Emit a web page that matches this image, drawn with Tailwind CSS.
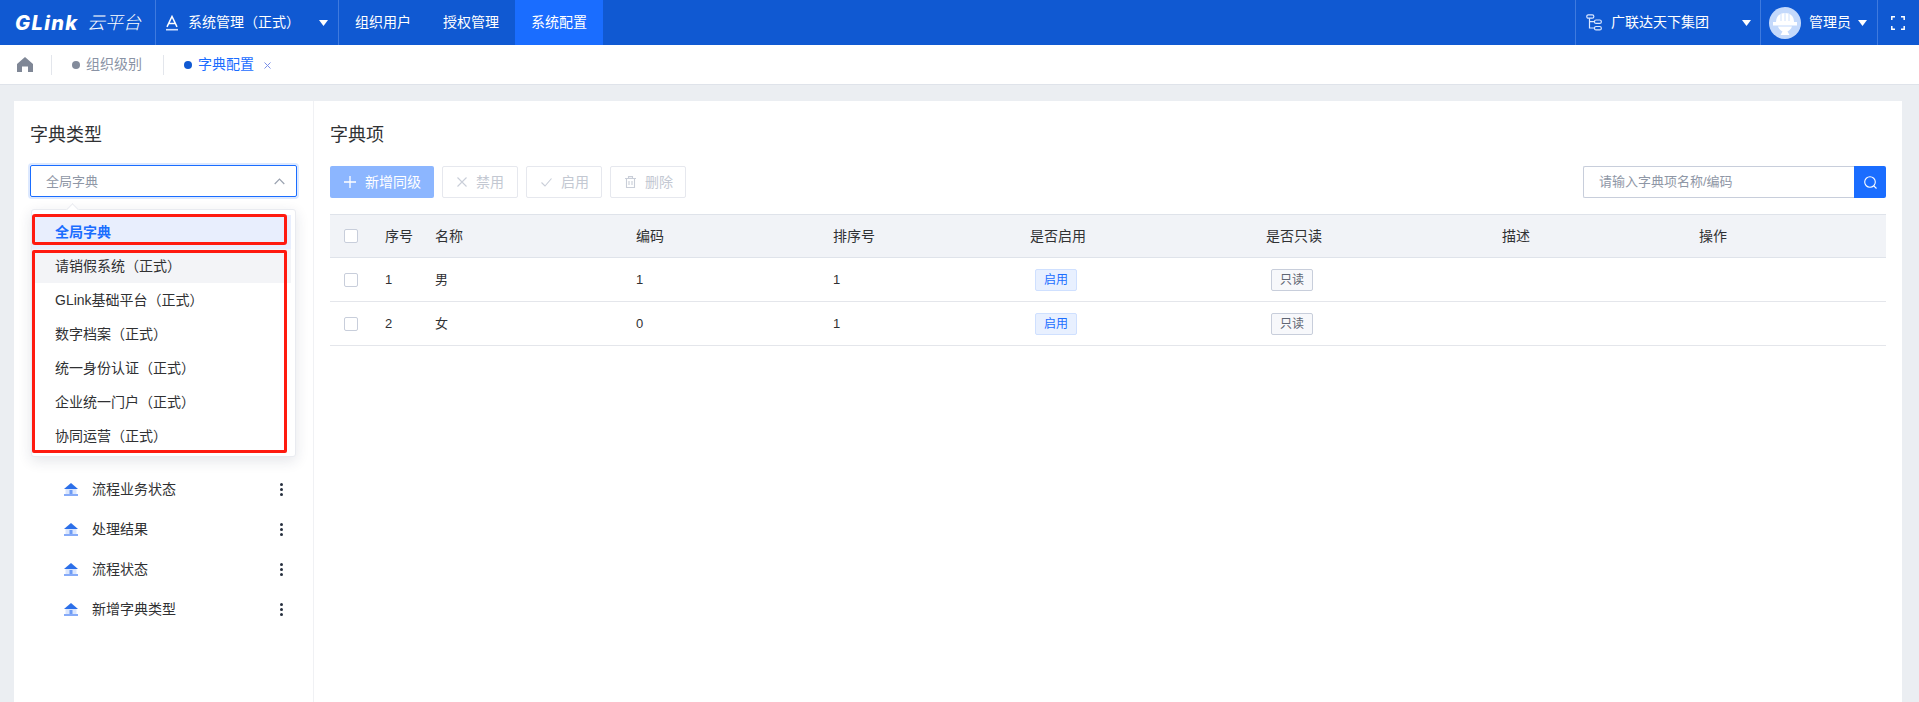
<!DOCTYPE html>
<html lang="zh-CN">
<head>
<meta charset="utf-8">
<title>字典配置</title>
<script src="https://cdn.jsdelivr.net/npm/@tailwindcss/browser@4"></script>
</head>
<body class="w-[1919px] h-[702px] overflow-hidden bg-[#ebeef2] text-[14px] text-[#303133] font-['Liberation_Sans','Noto_Sans_CJK_SC',sans-serif]">
<!-- top bar -->
<header class="h-[45px] bg-[#1059d2] flex items-stretch text-white">
  <div class="w-[156px] flex items-center pl-[15px] border-r border-[#3f7ade]">
    <span class="w-[72px] text-[20px] leading-none font-extrabold italic font-['Inter',sans-serif] tracking-[1.4px]">GLink</span>
    <span class="text-[18px] leading-none font-light italic">云平台</span>
  </div>
  <div class="w-[183px] flex items-center pl-[9px] border-r border-[#3f7ade]">
    <svg class="w-[14px] h-[16px] mr-[9px]" viewBox="0 0 14 16" fill="none" stroke="#fff" stroke-width="1.5"><path d="M2 11.800 7 1.500l5 10.300M4 8.500h6"/><path d="M1 14.700h12" stroke="#cfe0ff" stroke-width="1.6"/></svg>
    <span>系统管理（正式）</span>
    <svg class="w-[9px] h-[6px] ml-[19px]" viewBox="0 0 9 6" fill="#fff"><path d="M0 0h9L4.500 6z"/></svg>
  </div>
  <nav class="flex">
    <a class="px-4 flex items-center">组织用户</a>
    <a class="px-4 flex items-center">授权管理</a>
    <a class="px-4 flex items-center bg-[#1a6dff]">系统配置</a>
  </nav>
  <div class="ml-auto flex">
    <div class="w-[185px] flex items-center pl-[10px] border-l border-[#3f7ade]">
      <svg class="w-[16px] h-[17px] mr-[9px]" viewBox="0 0 16 17" fill="none" stroke="#dbe7ff" stroke-width="1.2"><rect x="0.8" y="0.8" width="7" height="3.4" rx="1.5"/><rect x="8.500" y="6" width="6.800" height="3.4" rx="1.500"/><rect x="8.500" y="12.500" width="6.800" height="3.400" rx="1.500"/><path d="M3.500 4.200V14h5M3.500 7.700h5"/></svg>
      <span>广联达天下集团</span>
      <svg class="w-[9px] h-[6px] ml-[33px]" viewBox="0 0 9 6" fill="#fff"><path d="M0 0h9L4.500 6z"/></svg>
    </div>
    <div class="w-[117px] flex items-center pl-[8px] border-l border-[#3f7ade]">
      <svg class="w-[32px] h-[32px] mr-[8px]" viewBox="0 0 32 32"><circle cx="16" cy="16" r="16" fill="#c4d9fb"/><path d="M7 15c0-6 4-9 9-9s9 3 9 9z" fill="#fff"/><path d="M4 15h24v3.500H4z" fill="#fff"/><path d="M9 19.500c1 3 3 4 4.500 5l-2 3.500h9l-2-3.500c1.500-1 3.500-2 4.500-5z" fill="#fff"/><path d="M12 7v7M16 6v8M20 7v7" stroke="#c4d9fb" stroke-width=".8"/></svg>
      <span>管理员</span>
      <svg class="w-[9px] h-[6px] ml-[7px]" viewBox="0 0 9 6" fill="#fff"><path d="M0 0h9L4.500 6z"/></svg>
    </div>
    <div class="w-[42px] flex items-center pl-[13px] border-l border-[#3f7ade]">
      <svg class="w-[14px] h-[14px]" viewBox="0 0 14 14" fill="none" stroke="#fff" stroke-width="1.500"><path d="M.8 4V.8H4M10 .8h3.200V4M13.200 10v3.200H10M4 13.200H.8V10"/></svg>
    </div>
  </div>
</header>
<!-- tabs -->
<div class="h-[40px] bg-white border-b border-[#dfe3ea] flex items-center">
  <div class="w-[52px] h-[20px] flex items-center pl-[17px] border-r border-[#e3e6ec]">
    <svg class="w-[16px] h-[15px]" viewBox="0 0 16 15" fill="#7f8796"><path d="M8 0 16 7v8h-5V9.500H5V15H0V7z"/></svg>
  </div>
  <div class="w-[112px] h-[20px] flex items-center pl-[20px] border-r border-[#e3e6ec] text-[#8a93a5]">
    <span class="w-[8px] h-[8px] rounded-full bg-[#838b9b] mr-[6px]"></span><span>组织级别</span>
  </div>
  <div class="flex items-center pl-[20px] text-[#1a6dff]">
    <span class="w-[8px] h-[8px] rounded-full bg-[#1059d2] mr-[6px]"></span><span>字典配置</span>
    <svg class="w-[7px] h-[7px] ml-[10px] mt-[2px]" viewBox="0 0 7 7" stroke="#7a8fe8" stroke-width="1" fill="none"><path d="M.5.5l6 6M6.500.5l-6 6"/></svg>
  </div>
</div>
<!-- main -->
<main class="mt-[16px] ml-[14px] w-[1888px] h-[601px] bg-white flex">
  <aside class="relative w-[300px] shrink-0 border-r border-[#f0f1f4] px-[16px]">
    <h2 class="mt-[21px] h-[26px] leading-[26px] text-[18px] text-[#303133]">字典类型</h2>
    <div class="mt-[17px] h-[32px] w-[267px] rounded-[2px] border border-[#1a6dff] ring-2 ring-[#1a6dff]/15 flex items-center justify-between pl-[15px] pr-[11px] pt-[1px] text-[13px] text-[#8f97a6]">
      <span>全局字典</span>
      <svg class="w-[11px] h-[7px]" viewBox="0 0 11 7" fill="none" stroke="#9aa2b0" stroke-width="1.200"><path d="M.7 6 5.500 1l4.800 5"/></svg>
    </div>
    <!-- tree -->
    <ul class="mt-[272px]">
      <li class="h-[40px] flex items-center pl-[34px] pr-[14px]">
        <svg class="w-[14px] h-[13px] mr-[14px]" viewBox="0 0 14 13"><path d="M7 0l7 6H0z" fill="#2c6fe9"/><path d="M1.500 6h11v7h-11z" fill="#dbe6fd"/><path d="M5.500 7h3v4h-3z" fill="#6f9cf5"/><path d="M0 11h14v2H0z" fill="#86abf8"/></svg>
        <span class="flex-1">流程业务状态</span>
        <svg class="w-[3px] h-[13px]" viewBox="0 0 3 13" fill="#27303f"><circle cx="1.500" cy="1.500" r="1.500"/><circle cx="1.500" cy="6.500" r="1.500"/><circle cx="1.500" cy="11.500" r="1.500"/></svg>
      </li>
      <li class="h-[40px] flex items-center pl-[34px] pr-[14px]">
        <svg class="w-[14px] h-[13px] mr-[14px]" viewBox="0 0 14 13"><path d="M7 0l7 6H0z" fill="#2c6fe9"/><path d="M1.500 6h11v7h-11z" fill="#dbe6fd"/><path d="M5.500 7h3v4h-3z" fill="#6f9cf5"/><path d="M0 11h14v2H0z" fill="#86abf8"/></svg>
        <span class="flex-1">处理结果</span>
        <svg class="w-[3px] h-[13px]" viewBox="0 0 3 13" fill="#27303f"><circle cx="1.500" cy="1.500" r="1.500"/><circle cx="1.500" cy="6.500" r="1.500"/><circle cx="1.500" cy="11.500" r="1.500"/></svg>
      </li>
      <li class="h-[40px] flex items-center pl-[34px] pr-[14px]">
        <svg class="w-[14px] h-[13px] mr-[14px]" viewBox="0 0 14 13"><path d="M7 0l7 6H0z" fill="#2c6fe9"/><path d="M1.500 6h11v7h-11z" fill="#dbe6fd"/><path d="M5.500 7h3v4h-3z" fill="#6f9cf5"/><path d="M0 11h14v2H0z" fill="#86abf8"/></svg>
        <span class="flex-1">流程状态</span>
        <svg class="w-[3px] h-[13px]" viewBox="0 0 3 13" fill="#27303f"><circle cx="1.500" cy="1.500" r="1.500"/><circle cx="1.500" cy="6.500" r="1.500"/><circle cx="1.500" cy="11.500" r="1.500"/></svg>
      </li>
      <li class="h-[40px] flex items-center pl-[34px] pr-[14px]">
        <svg class="w-[14px] h-[13px] mr-[14px]" viewBox="0 0 14 13"><path d="M7 0l7 6H0z" fill="#2c6fe9"/><path d="M1.500 6h11v7h-11z" fill="#dbe6fd"/><path d="M5.500 7h3v4h-3z" fill="#6f9cf5"/><path d="M0 11h14v2H0z" fill="#86abf8"/></svg>
        <span class="flex-1">新增字典类型</span>
        <svg class="w-[3px] h-[13px]" viewBox="0 0 3 13" fill="#27303f"><circle cx="1.500" cy="1.500" r="1.500"/><circle cx="1.500" cy="6.500" r="1.500"/><circle cx="1.500" cy="11.500" r="1.500"/></svg>
      </li>
    </ul>
    <!-- dropdown overlay -->
    <div class="absolute left-[17px] top-[108px] w-[265px] h-[248px] bg-white rounded-[3px] border border-[#e9ebf0] shadow-[0_4px_14px_rgba(30,40,70,0.12)] pt-[5px]">
      <span class="absolute left-[36px] -top-[5px] w-[9px] h-[9px] rotate-45 bg-white border-l border-t border-[#e9ebf0]"></span>
      <ul class="relative mr-[4px]">
        <li class="h-[34px] leading-[34px] pl-[23px] bg-[#e8eefd] text-[#1a6dff] font-bold">全局字典</li>
        <li class="h-[34px] leading-[34px] pl-[23px] bg-[#f3f4f7]">请销假系统（正式）</li>
        <li class="h-[34px] leading-[34px] pl-[23px]">GLink基础平台（正式）</li>
        <li class="h-[34px] leading-[34px] pl-[23px]">数字档案（正式）</li>
        <li class="h-[34px] leading-[34px] pl-[23px]">统一身份认证（正式）</li>
        <li class="h-[34px] leading-[34px] pl-[23px]">企业统一门户（正式）</li>
        <li class="h-[34px] leading-[34px] pl-[23px]">协同运营（正式）</li>
      </ul>
    </div>
    <!-- red annotation boxes -->
    <div class="absolute left-[18px] top-[113px] w-[255px] h-[31px] border-[3px] border-[#ff1a0f] rounded-[3px]"></div>
    <div class="absolute left-[18px] top-[149px] w-[255px] h-[203px] border-[3px] border-[#ff1a0f] rounded-[2px]"></div>
  </aside>
  <section class="w-[1556px] ml-[16px]">
    <h2 class="mt-[21px] h-[26px] leading-[26px] text-[18px] text-[#303133]">字典项</h2>
    <div class="mt-[18px] h-[32px] flex items-stretch gap-[8px]">
      <button class="w-[104px] rounded-[2px] bg-[#8cb6ff] text-white flex items-center pl-[14px] gap-[9px]">
        <svg class="w-[12px] h-[12px]" viewBox="0 0 12 12" stroke="#fff" stroke-width="1.300"><path d="M6 0v12M0 6h12"/></svg>新增同级
      </button>
      <button class="w-[76px] rounded-[2px] border border-[#e6e8ee] text-[#c3c8d2] flex items-center pl-[14px] gap-[9px]">
        <svg class="w-[10px] h-[10px]" viewBox="0 0 10 10" stroke="#c9ced8" stroke-width="1.100" fill="none"><path d="M.5.500l9 9M9.500.500l-9 9"/></svg>禁用
      </button>
      <button class="w-[76px] rounded-[2px] border border-[#e6e8ee] text-[#c3c8d2] flex items-center pl-[14px] gap-[9px]">
        <svg class="w-[11px] h-[9px]" viewBox="0 0 11 9" stroke="#c9ced8" stroke-width="1.100" fill="none"><path d="M.5 4.500l3.500 3.500 6.500-7.500"/></svg>启用
      </button>
      <button class="w-[76px] rounded-[2px] border border-[#e6e8ee] text-[#c3c8d2] flex items-center pl-[14px] gap-[9px]">
        <svg class="w-[11px] h-[12px]" viewBox="0 0 11 12" stroke="#c9ced8" stroke-width="1.100" fill="none"><path d="M0 2.500h11M3.500 2.500V.6h4v1.900M1.500 2.500v9h8v-9M4 5v4M7 5v4"/></svg>删除
      </button>
      <div class="ml-auto flex">
        <div class="w-[271px] border border-[#c8cedb] border-r-0 rounded-l-[2px] flex items-center pl-[15px] text-[13px] text-[#8f97a6]">请输入字典项名称/编码</div>
        <div class="w-[32px] bg-[#1a6dff] rounded-r-[2px] flex items-center justify-center">
          <svg class="w-[13px] h-[13px]" viewBox="0 0 13 13" fill="none" stroke="#fff" stroke-width="1.100"><circle cx="6" cy="6" r="5.300"/><path d="M9.800 9.800 12.500 12.500"/></svg>
        </div>
      </div>
    </div>
    <div class="mt-[16px]">
      <div class="h-[44px] bg-[#f1f3f7] border-y border-[#dfe3ea] grid grid-cols-[55px_50px_201px_197px_157px_136px_336px_197px_1fr] items-center">
        <span class="ml-[14px] w-[14px] h-[14px] rounded-[2px] border border-[#c8cedb] bg-white"></span>
        <span>序号</span><span>名称</span><span>编码</span><span>排序号</span>
        <span class="text-center">是否启用</span><span class="text-center">是否只读</span>
        <span class="pl-[40px]">描述</span><span class="pl-[40px]">操作</span>
      </div>
      <div class="h-[44px] border-b border-[#e4e6eb] text-[13px] grid grid-cols-[55px_50px_201px_197px_157px_136px_336px_197px_1fr] items-center">
        <span class="ml-[14px] w-[14px] h-[14px] rounded-[2px] border border-[#c8cedb] bg-white"></span>
        <span>1</span><span>男</span><span>1</span><span>1</span>
        <span class="ml-[45px] w-[42px] h-[22px] leading-[20px] text-center text-[12px] rounded-[2px] border border-[#cfe0ff] bg-[#e8f0ff] text-[#1a6dff]">启用</span>
        <span class="ml-[145px] w-[42px] h-[22px] leading-[20px] text-center text-[12px] rounded-[2px] border border-[#c8cedb] bg-[#f7f8fb] text-[#5f6673]">只读</span>
        <span></span><span></span>
      </div>
      <div class="h-[44px] border-b border-[#e4e6eb] text-[13px] grid grid-cols-[55px_50px_201px_197px_157px_136px_336px_197px_1fr] items-center">
        <span class="ml-[14px] w-[14px] h-[14px] rounded-[2px] border border-[#c8cedb] bg-white"></span>
        <span>2</span><span>女</span><span>0</span><span>1</span>
        <span class="ml-[45px] w-[42px] h-[22px] leading-[20px] text-center text-[12px] rounded-[2px] border border-[#cfe0ff] bg-[#e8f0ff] text-[#1a6dff]">启用</span>
        <span class="ml-[145px] w-[42px] h-[22px] leading-[20px] text-center text-[12px] rounded-[2px] border border-[#c8cedb] bg-[#f7f8fb] text-[#5f6673]">只读</span>
        <span></span><span></span>
      </div>
    </div>
  </section>
</main>
</body>
</html>
